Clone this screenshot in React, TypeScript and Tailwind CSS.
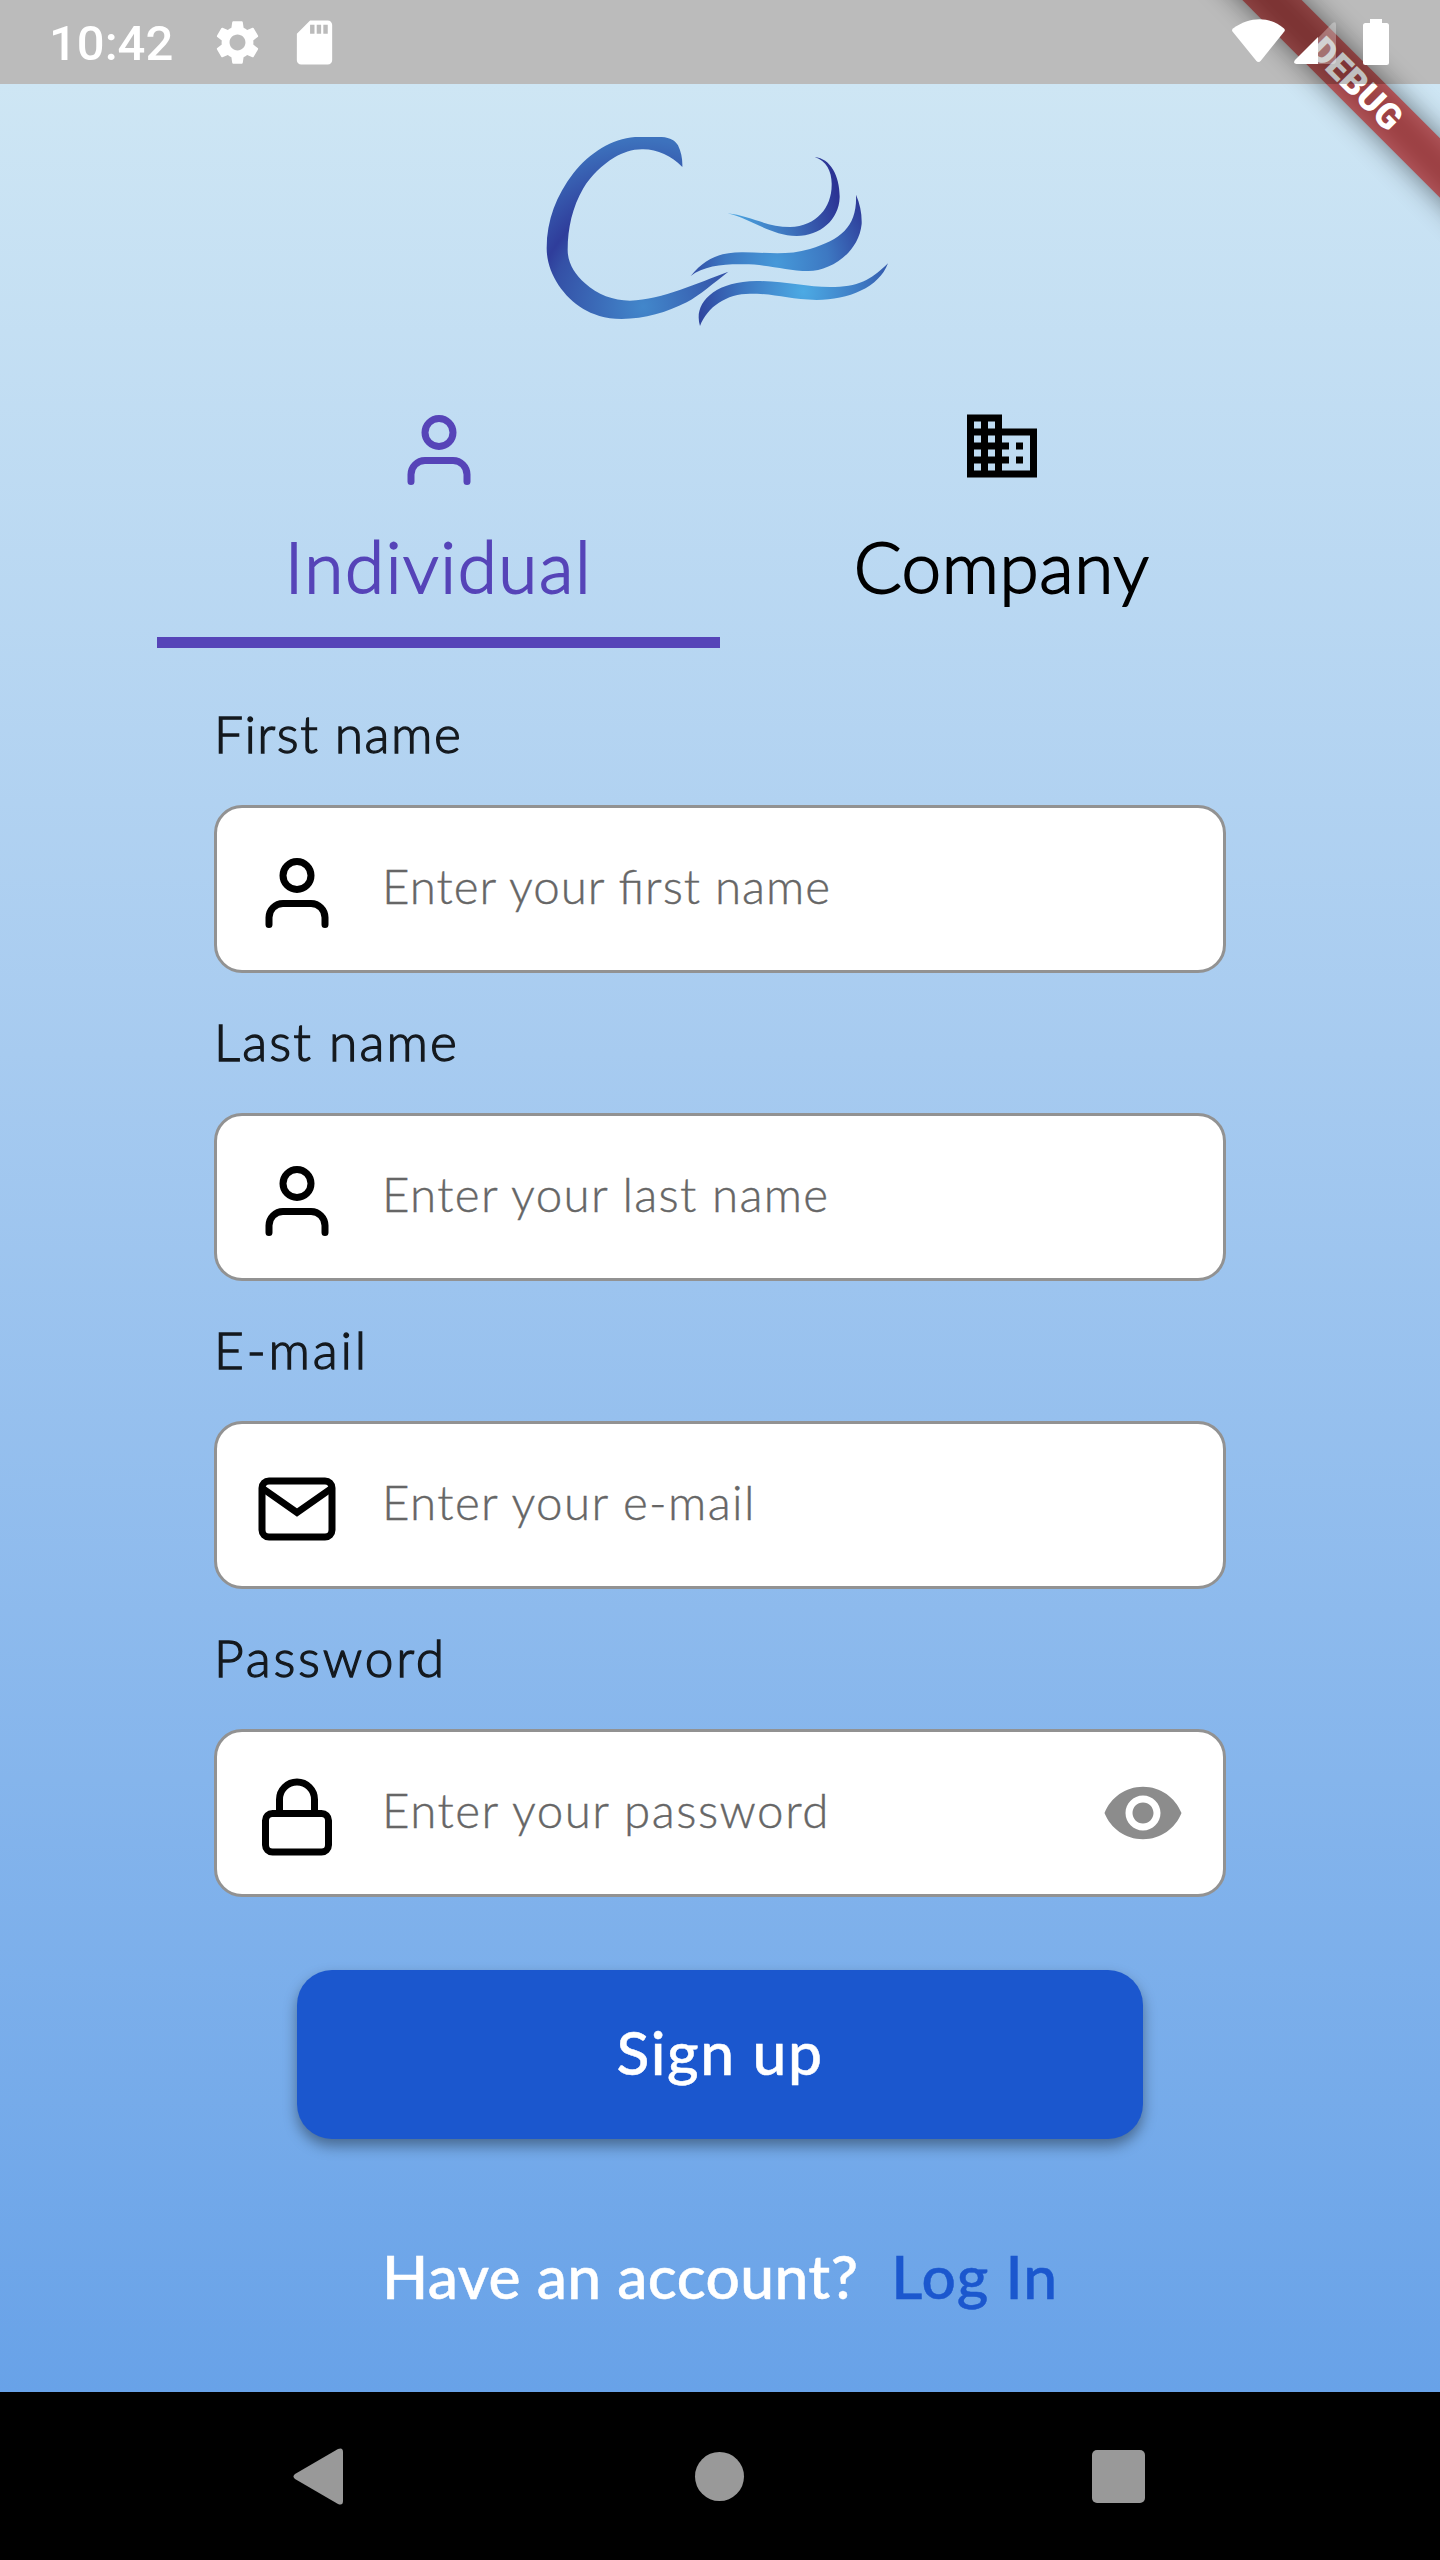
import type { ReactNode } from "react";
import { FiLock, FiUser } from "react-icons/fi";
import { MdBusiness, MdSdCard, MdSettings, MdVisibility } from "react-icons/md";

function Logo() {
  return (
    <svg className="mt-9 h-[220px] w-[400px] shrink-0" viewBox="0 0 1200 660" role="img" aria-label="Logo">
      <defs>
        <radialGradient id="letter" gradientUnits="userSpaceOnUse" cx="370" cy="560" r="500">
          <stop offset="0" stopColor="#4287cb" />
          <stop offset="0.55" stopColor="#3450a6" />
          <stop offset="0.64" stopColor="#2f3d9b" />
          <stop offset="1" stopColor="#3d72bd" />
        </radialGradient>
        <linearGradient id="crest" gradientUnits="userSpaceOnUse" x1="640" y1="290" x2="950" y2="210">
          <stop offset="0" stopColor="#4aa3df" />
          <stop offset="0.5" stopColor="#3c70bb" />
          <stop offset="1" stopColor="#2c3394" />
        </linearGradient>
        <radialGradient id="middle" gradientUnits="userSpaceOnUse" cx="770" cy="430" r="310">
          <stop offset="0" stopColor="#4699d9" />
          <stop offset="0.5" stopColor="#3d78c2" />
          <stop offset="1" stopColor="#2d3796" />
        </radialGradient>
        <radialGradient id="base" gradientUnits="userSpaceOnUse" cx="850" cy="515" r="320">
          <stop offset="0" stopColor="#4caae4" />
          <stop offset="0.55" stopColor="#3d78c2" />
          <stop offset="1" stopColor="#2f469f" />
        </radialGradient>
      </defs>
      <path
        fill="url(#letter)"
        d="M345 51H425C452 53 466 62 474 76C484 96 488 120 487 141C455 108 412 88 370 88C338 87 310 97 284 112C245 136 213 167 190 205C157 262 143 325 143 390C143 430 165 463 195 490C232 524 280 542 330 542C430 537 530 490 625 455C582 488 540 525 500 547C440 577 375 597 305 597C255 597 215 582 190 567C125 527 80 455 80 385C80 300 110 225 160 160C210 97 275 57 345 51Z"
      />
      <path
        fill="url(#crest)"
        d="M884 111C932 115 960 170 959 232C957 300 900 348 830 348C750 346 695 297 622 280C690 287 740 321 810 321C890 319 935 262 935 195C936 155 920 122 884 111Z"
      />
      <path
        fill="url(#middle)"
        d="M1008 224C1020 252 1026 280 1025 312C1016 400 930 453 865 453C800 453 750 433 670 433C610 432 550 438 512 468C555 415 600 396 670 397C740 397 800 408 870 387C965 358 1012 318 1008 224Z"
      />
      <path
        fill="url(#base)"
        d="M1104 430C1078 502 985 540 890 540C805 538 765 521 690 521C620 521 562 560 540 618C520 555 575 484 710 483C800 483 870 504 945 501C1025 500 1063 470 1104 430Z"
      />
    </svg>
  );
}

function MailIcon() {
  return (
    <svg className="size-[84px]" viewBox="0 0 24 24" fill="none" stroke="currentColor" strokeWidth="2">
      <rect x="2" y="4" width="20" height="16" rx="2" />
      <path d="M22 6 12 13 2 6" />
    </svg>
  );
}

interface FieldProps {
  label: string;
  labelClass: string;
  hint: string;
  hintClass: string;
  icon: ReactNode;
  trailing?: ReactNode;
}

function Field({ label, labelClass, hint, hintClass, icon, trailing }: FieldProps) {
  return (
    <div className="flex w-[1012px] flex-col">
      <span
        className={`text-[51.5px] leading-16 font-light text-[#14191e] [-webkit-text-stroke:1.3px_#14191e] ${labelClass}`}
      >
        {label}
      </span>
      <div className="mt-10 flex h-[168px] items-start rounded-[28px] border-[3px] border-[#929292] bg-white pr-[38px] pl-[38px]">
        <span className="mt-[43px] text-black">{icon}</span>
        <span
          className={`mt-12 ml-[43px] text-[47.5px] leading-[60px] font-light text-[#666666] [-webkit-text-stroke:0.4px_#666666] [font-feature-settings:'liga'] ${hintClass}`}
        >
          {hint}
        </span>
        {trailing}
      </div>
    </div>
  );
}

function DebugRibbon() {
  return (
    <div className="pointer-events-none absolute top-0 right-0 size-[300px] overflow-hidden">
      <div className="absolute top-[63px] left-[-84px] h-[42px] w-[600px] rotate-45 bg-black/50 blur-[14px]" />
      <div className="absolute top-[63px] left-[-84px] flex h-[42px] w-[600px] rotate-45 items-center justify-center bg-[#b71c1c]/[0.627] font-[Roboto,sans-serif] text-[35.7px] leading-[42px] font-black text-white">
        DEBUG
      </div>
    </div>
  );
}

function StatusBar() {
  return (
    <div className="absolute inset-x-0 top-0 flex h-[84px] bg-black/25 text-white">
      <span className="mt-[15px] ml-[49px] w-[162px] font-[Roboto,sans-serif] text-[49px] leading-[57px] font-medium">
        10:42
      </span>
      <MdSettings className="mt-[16px] size-[53px]" />
      <MdSdCard className="mt-[16px] ml-[24px] size-[53px]" />
      <svg className="mt-[18px] ml-auto h-[48px] w-[160px] shrink-0" viewBox="0 0 160 48">
        <path
          fill="currentColor"
          d="M3 10.5C20 -1.700 40 -1.700 54 10.500Q55.500 12 54.300 13.500L31 42.500Q28.500 45.500 26 42.500L2.500 13.500Q1.300 12 3 10.500Z"
        />
        <path fill="currentColor" fillOpacity="0.3" d="M88 20 102 5.500Q106 2.500 106 6.500V43Q106 46 103 46H88Z" />
        <path fill="currentColor" d="M88 19V46H66.500Q62.500 45.500 65 42Z" />
        <path
          fill="currentColor"
          d="M140 1H152V5H156.500Q159 5 159 7.500V44.500Q159 47 156.500 47H135.500Q133 47 133 44.500V7.500Q133 5 135.500 5H140Z"
        />
      </svg>
      <div className="w-[50px]" />
    </div>
  );
}

export default function App() {
  return (
    <div className="relative flex h-[2560px] w-[1440px] flex-col overflow-hidden bg-[#fafafa] font-[Lato,sans-serif]">
      <div className="h-[84px] shrink-0" />
      <main className="flex h-[2308px] flex-col items-center bg-linear-to-b from-[#cee6f4] via-[#a7cbf0] via-[42%] to-[#68a2e8]">
        <Logo />
        <div className="mt-16 flex w-[1126px]">
          <button className="flex w-[563px] flex-col items-center border-b-[11px] border-[#5644b8] pt-1 pb-[29px] text-[#5644b8]">
            <FiUser className="size-[84px]" />
            <span className="mt-8 text-[71px] leading-[84px] font-light tracking-[1.6px] [-webkit-text-stroke:1.8px_#5644b8]">
              Individual
            </span>
          </button>
          <button className="flex w-[563px] flex-col items-center text-black">
            <MdBusiness className="size-[84px]" />
            <span className="mt-9 text-[71px] leading-[84px] font-light tracking-[0.6px] [-webkit-text-stroke:1.8px_black]">
              Company
            </span>
          </button>
        </div>
        <div className="mt-[53px] flex flex-col gap-9">
          <Field
            label="First name"
            labelClass="tracking-[1.5px]"
            hint="Enter your first name"
            hintClass="tracking-[1px]"
            icon={<FiUser className="size-[84px]" />}
          />
          <Field
            label="Last name"
            labelClass="tracking-[2.1px]"
            hint="Enter your last name"
            hintClass="tracking-[1.35px]"
            icon={<FiUser className="size-[84px]" />}
          />
          <Field
            label="E-mail"
            labelClass="tracking-[2.8px]"
            hint="Enter your e-mail"
            hintClass="tracking-[1.4px]"
            icon={<MailIcon />}
          />
          <Field
            label="Password"
            labelClass="tracking-[2.8px]"
            hint="Enter your password"
            hintClass="tracking-[1.5px]"
            icon={<FiLock className="size-[84px]" />}
            trailing={<MdVisibility className="mt-[39px] ml-auto size-[84px] text-[#8c8c8c]" />}
          />
        </div>
        <button className="mt-[73px] h-[169px] w-[846px] shrink-0 rounded-[35px] bg-[#1b57ce] pb-1.5 text-[60.5px] leading-[72px] font-medium tracking-[1.6px] text-white shadow-[0_7px_14px_rgba(0,0,0,0.38)] [-webkit-text-stroke:0.5px_white]">
          Sign up
        </button>
        <div className="mt-[101px] flex gap-[33px] text-[60.5px] leading-[72px] font-medium whitespace-nowrap">
          <span className="tracking-[0.4px] text-white [-webkit-text-stroke:0.5px_white]">Have an account?</span>
          <a className="tracking-[1px] text-[#1b57ce] [-webkit-text-stroke:0.5px_#1b57ce]">Log In</a>
        </div>
      </main>
      <nav className="flex h-[168px] items-center bg-black pl-[293px] text-[#999999]">
        <svg className="h-[57px] w-[50px]" viewBox="0 0 50 57" fill="currentColor">
          <path d="M2 26 45 1Q50 -1 50 4V53Q50 58 45 56L2 31Q-1 28.500 2 26Z" />
        </svg>
        <div className="ml-[352px] size-[49px] rounded-full bg-[#999999]" />
        <div className="ml-[348px] size-[53px] rounded-[5px] bg-[#999999]" />
      </nav>
      <DebugRibbon />
      <StatusBar />
    </div>
  );
}
